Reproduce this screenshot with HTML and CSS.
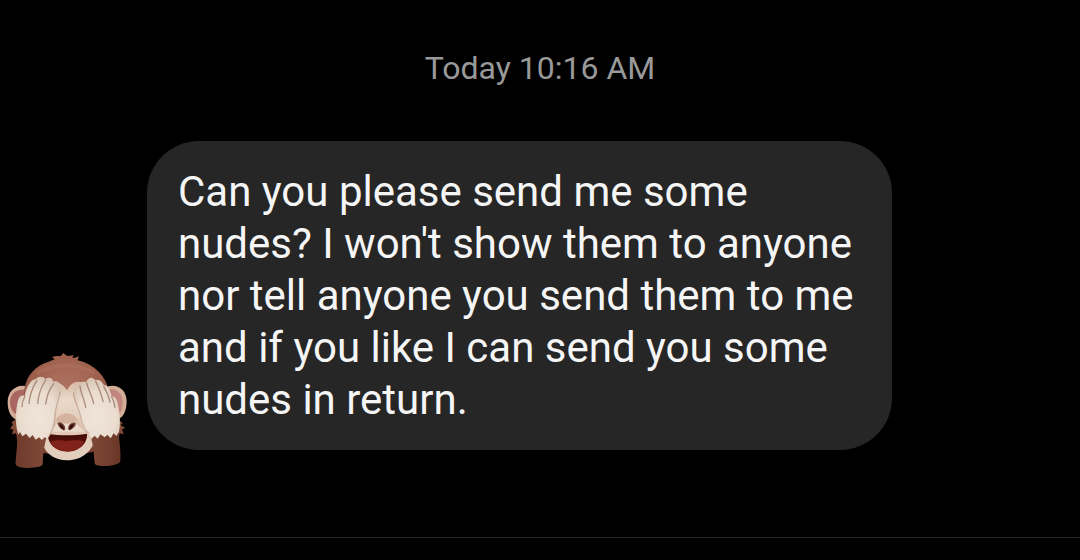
FILE: index.html
```html
<!DOCTYPE html>
<html lang="en">
<head>
<meta charset="utf-8">
<meta name="viewport" content="width=device-width, initial-scale=1">
<title>Conversation</title>
<link rel="stylesheet" href="styles.css">
</head>
<body>
<main class="thread">
  <time class="timestamp">Today 10:16 AM</time>
  <article class="message">
    <svg class="avatar" viewBox="0 30 396 360" role="img" aria-label="Monkey covering its eyes">
      <defs>
        <radialGradient id="fur" cx=".5" cy=".35" r=".6">
          <stop offset="0" stop-color="#b07462"/><stop offset=".6" stop-color="#9d5f4c"/><stop offset="1" stop-color="#7b4231"/>
        </radialGradient>
        <linearGradient id="arm" x1="0" x2="1">
          <stop offset="0" stop-color="#6e3a2b"/><stop offset=".5" stop-color="#8f5644"/><stop offset="1" stop-color="#6a3727"/>
        </linearGradient>
        <radialGradient id="hand" cx=".5" cy=".65" r=".65">
          <stop offset="0" stop-color="#f0e4da"/><stop offset=".65" stop-color="#eadccf"/><stop offset="1" stop-color="#d8c3b2"/>
        </radialGradient>
        <linearGradient id="face" x1="0" y1="0" x2="0" y2="1">
          <stop offset="0" stop-color="#d8b9a6"/><stop offset=".3" stop-color="#ead8c8"/><stop offset="1" stop-color="#dfc4b0"/>
        </linearGradient>
        <linearGradient id="ear" x1="0" y1="0" x2="1" y2="0">
          <stop offset="0" stop-color="#a8655f"/><stop offset="1" stop-color="#c48780"/>
        </linearGradient>
        <linearGradient id="mouth" x1="0" y1="0" x2="0" y2="1">
          <stop offset="0" stop-color="#3c0a05"/><stop offset=".5" stop-color="#5c1109"/><stop offset="1" stop-color="#70190f"/>
        </linearGradient>
      </defs>
      <path fill="#844a38" d="M48 236l-14 12 5 5-9 14 10 1-4 15 12-3 4 20 20 2V236zM354 236l14 14-6 5 14 9-10 4 5 15-12-3-5 20-14 2V236z"/>
      <path fill="#d3ad98" d="M82 139c-34-8-58 15-59 45-1 32 13 54 31 57l30-25zM324 139c34-8 56 15 56 45 0 32-13 53-32 56l-28-26z"/>
      <path fill="url(#ear)" d="M78 149c-29-4-48 13-48 37 0 20 9 34 22 37l30-34zM328 148c25-2 40 15 40 39 0 21-7 32-15 37l-26-32z"/>
      <path fill="url(#fur)" d="M146 65l18-7-8-7c9-3 17-4 26-2l8-10 12 9 19-2-4 8c8 0 13-1 20-5l-4 12c50 12 85 46 94 94l24 63-16 98c-36 18-82 28-133 28-62 0-118-7-152-46l24-155c7-38 31-65 72-78z"/>
      <path fill="none" stroke="#c58c7a" stroke-opacity=".16" stroke-width="12" d="M110 100c52-31 123-32 174 0"/>
      <path fill="url(#face)" d="M152 132c20-10 38 0 49 19 10-19 25-30 45-24l48 84-16 90H150l-10-97z"/>
      <path fill="#e3cebd" d="M123 295h163c-8 37-39 66-84 66-43 0-72-23-79-66z"/>
      <path fill="#dac0ad" d="M158 270c2-30 17-50 42-50s44 22 46 51z"/>
      <path fill="#eadaca" d="M155 275c9-24 25-33 45-33s36 12 52 33z"/>
      <path fill="#d5b29e" d="M168 242c5-14 16-21 32-21 17 0 28 7 32 22-10-2-18 8-32 8-15 0-23-10-32-9z"/>
      <path fill="#6f3e35" d="M175 247c7-2 17 4 20 13 2 8-1 13-5 11-10-4-22-20-15-24zM225 248c-7-3-17 3-20 12-2 8 2 12 6 10 9-4 22-18 14-22z"/>
      <path fill="#2d0c09" d="M179 251c8 2 13 9 13 18-8-4-14-11-13-18zM220 252c-7 1-13 7-13 17 9-3 14-10 13-17z"/>
      <path fill="url(#mouth)" d="M143 281c36 6 78 6 118 0 2 29-23 54-59 54s-59-25-59-54z"/>
      <path fill="#81231a" d="M151 306c18-8 32-6 48-2 20-4 35-5 53 1-8 18-25 28-51 28-25 0-42-9-50-27z"/>
      <path fill="url(#arm)" d="M51 270c28 15 60 17 91 12-7 27-13 53-14 91-1 12-72 16-80 2-4-7 7-62 3-105zM266 279c32 9 65 7 89-4 3 29 8 55 6 88-2 16-67 20-76 9-4-12-1-63-19-93z"/>
      <path fill="url(#hand)" d="M54 181c4-12 10-17 20-14 4-21 17-50 34-50 8-10 22-8 28 0 12-7 22-3 24 8 14-5 25 7 22 23-5 28-16 50-17 81-2 29-8 49-22 67l-9-4-8 8-9-8-10 7-9-14-9 9-11-13-11 8-7-13-5 8c-11-33-8-74-1-103z"/>
      <path fill="url(#hand)" d="M220 155c1-14 9-23 20-20 2-12 11-13 18-8 7-17 20-18 28-6 14-5 21 5 26 15 12-3 18 16 23 33 12 0 17 13 20 31 5 26 7 54 2 75l-8 13-8-8-9 15-10-11-8 8-13-9-8 13-9-9-10 10-8-15c-13-8-21-27-25-48-5-25-25-54-21-79z"/>
      <g fill="none" stroke="#8f6a59" stroke-width="4" stroke-linecap="round" stroke-opacity=".7">
        <path d="M75 168c-6 11-9 22-9 32M110 122c-12 20-21 42-23 68M137 120c-14 22-22 44-24 70M161 131c-13 17-21 37-24 61M240 137c1 20 14 42 17 65M260 129c5 21 17 40 21 62M287 124c9 20 18 38 22 61M311 139c10 17 16 32 19 47M335 170c6 11 9 20 10 33"/>
      </g>
      <path fill="none" stroke="#a57965" stroke-opacity=".45" stroke-width="4" d="M181 155c-5 29-15 45-16 72-2 29-7 48-20 65M221 157c-1 24 17 48 21 74 4 22 12 40 24 49"/>
    </svg>
    <p class="bubble">Can you please send me some nudes? I won't show them to anyone nor tell anyone you send them to me and if you like I can send you some nudes in return.</p>
  </article>
</main>
<hr class="divider">
</body>
</html>
```
FILE: styles.css
```css
* {
  box-sizing: border-box;
}

body {
  margin: 0;
  background: #000;
  color: #f5f5f5;
  font-family: Roboto, "Liberation Sans", sans-serif;
}

.thread {
  display: flex;
  flex-direction: column;
  gap: 53px;
  padding: 48px 0 67px;
}

.timestamp {
  color: #999;
  font-size: 32px;
  line-height: 40px;
  text-align: center;
}

.message {
  display: flex;
  align-items: flex-end;
  gap: 15px;
}

.avatar {
  flex: none;
  width: 132px;
  height: 120px;
}

.bubble {
  max-width: 69%;
  margin: 0 0 20px;
  padding: 25px 31px 24px;
  border-radius: 52px;
  background: #262626;
  font-size: 42px;
  line-height: 52px;
}

.divider {
  height: 1px;
  margin: 0;
  border: 0;
  background: #262626;
}
```
